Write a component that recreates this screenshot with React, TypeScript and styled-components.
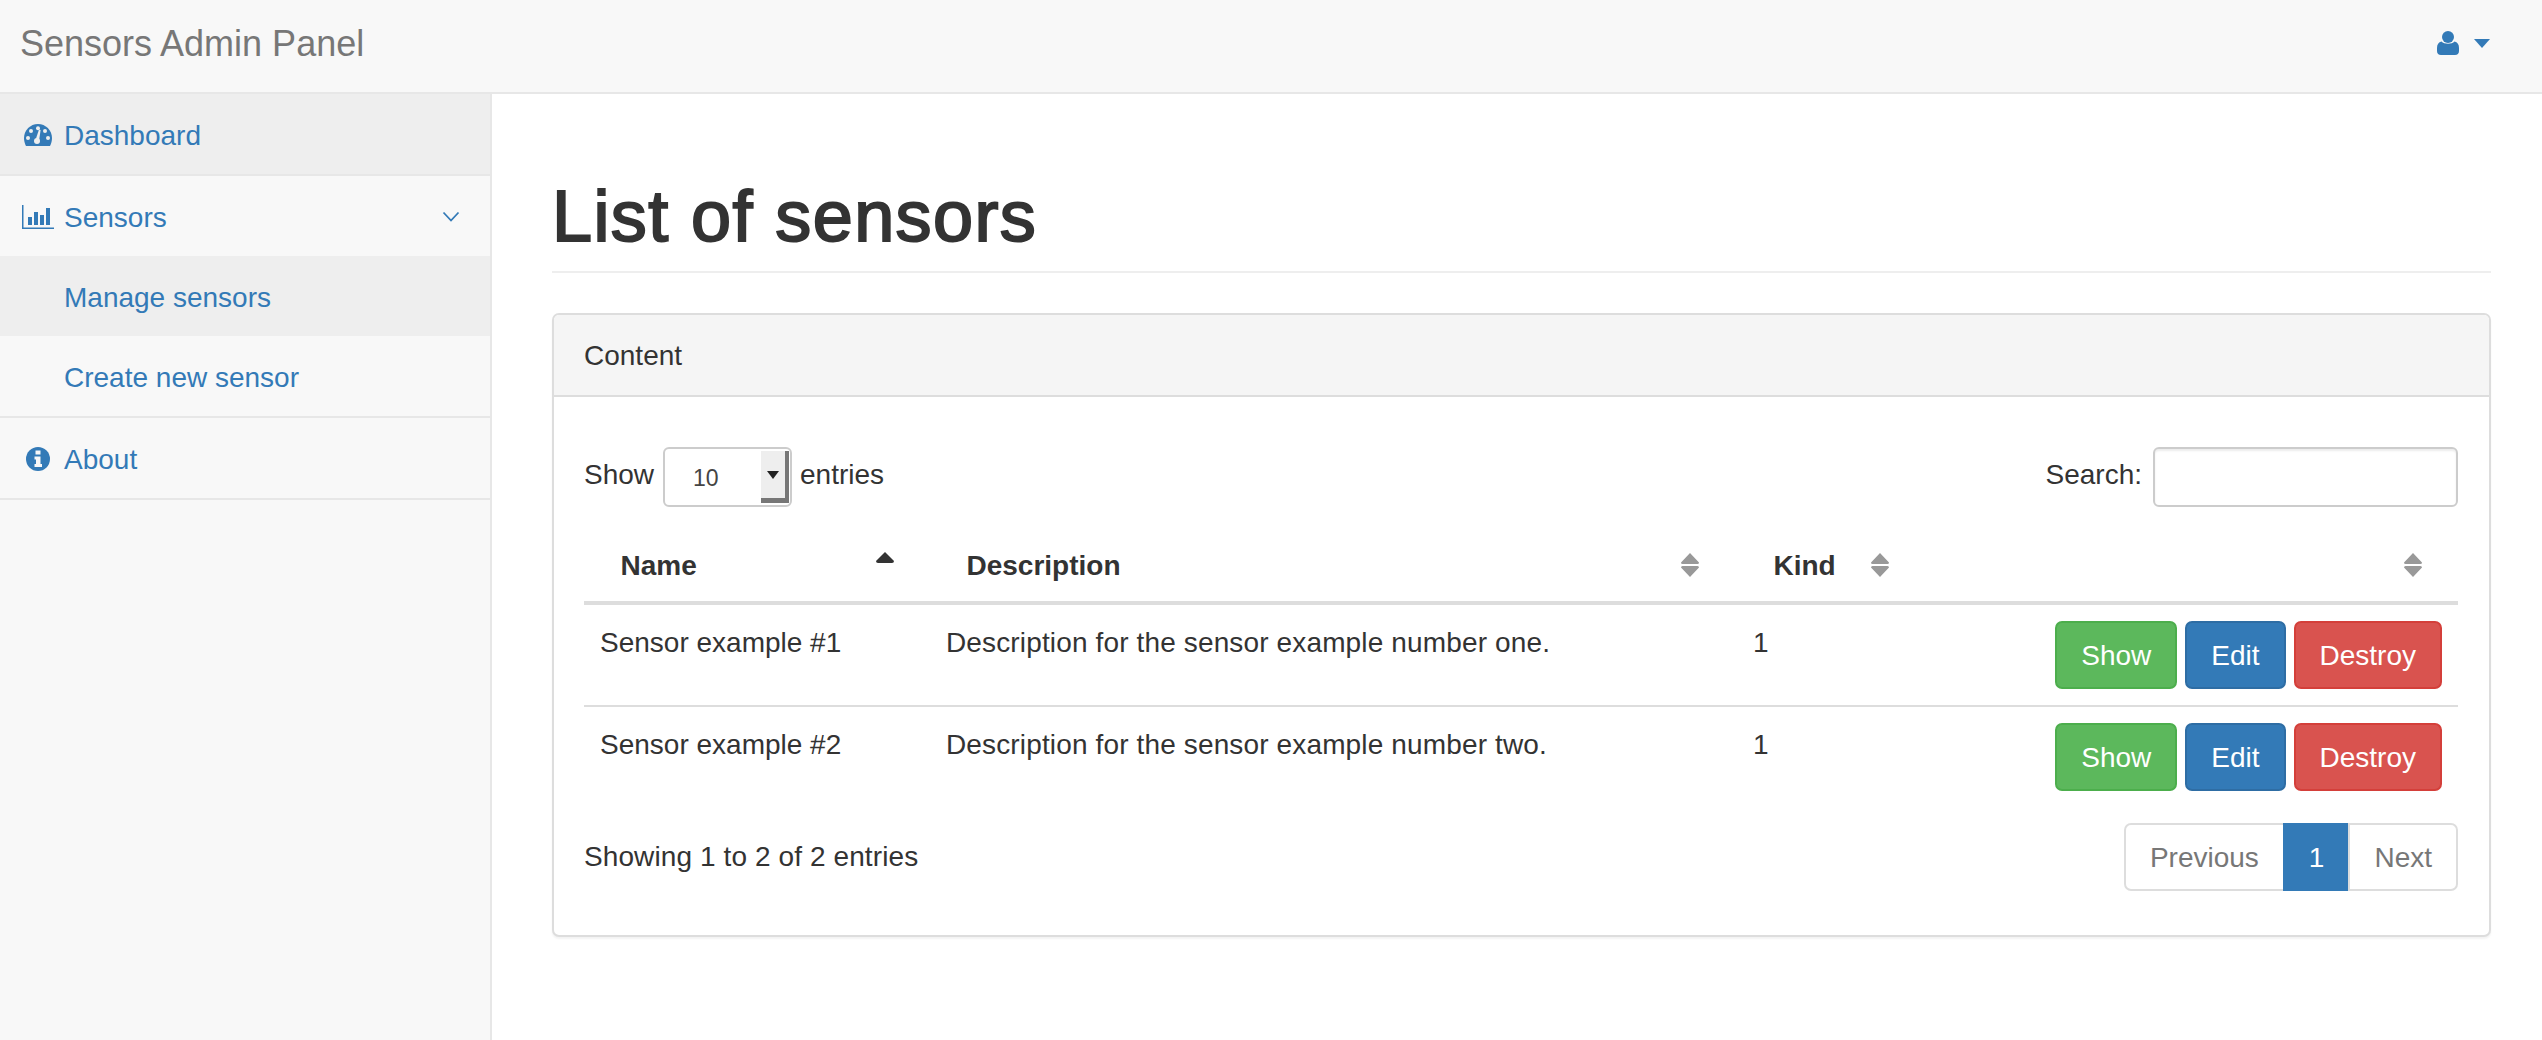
import React from "react";
import styled, { createGlobalStyle } from "styled-components";

const Global = createGlobalStyle`
  * { box-sizing: border-box; }
  html, body { margin: 0; padding: 0; height: 100%; background: #fff; }
  body { font-family: "Liberation Sans", Arial, sans-serif; font-size: 28px; line-height: 37px; color: #333; }
`;

const Page = styled.div`
  width: 2542px;
  height: 1040px;
  display: flex;
  flex-direction: column;
  overflow: hidden;
`;
const NavBar = styled.header`
  height: 94px;
  flex: none;
  background: #f8f8f8;
  border-bottom: 2px solid #e7e7e7;
  display: flex;
  align-items: center;
  justify-content: space-between;
  padding: 0 52px 0 20px;
`;
const Brand = styled.a`
  font-size: 36px;
  color: #777;
  margin-top: -6px;
`;
const UserMenu = styled.div`
  display: flex;
  align-items: center;
  gap: 15px;
  color: #337ab7;
  margin-top: -6px;
`;
const Body = styled.div`
  flex: 1;
  display: flex;
  min-height: 0;
`;
const SideBar = styled.nav`
  width: 492px;
  flex: none;
  background: #f8f8f8;
  border-right: 2px solid #e7e7e7;
`;
const NavItem = styled.a<{ $active?: boolean; $sub?: boolean; $divided?: boolean }>`
  display: flex;
  align-items: center;
  height: ${(p) => (p.$divided ? 82 : 80)}px;
  padding-left: ${(p) => (p.$sub ? 64 : 22)}px;
  padding-right: 30px;
  padding-top: 2px;
  color: #337ab7;
  background: ${(p) => (p.$active ? "#eee" : "transparent")};
  border-bottom: ${(p) => (p.$divided ? "2px solid #e7e7e7" : "none")};
`;
const NavIcon = styled.span`
  width: 32px;
  height: 32px;
  margin-right: 10px;
  flex: none;
  display: flex;
  align-items: center;
  justify-content: center;
  color: #337ab7;
`;
const Chevron = styled.svg`
  margin-left: auto;
`;
const Main = styled.main`
  flex: 1;
  min-width: 0;
  padding: 0 51px 0 60px;
`;
const Title = styled.h1`
  margin: 76px 0 40px;
  padding-bottom: 9px;
  border-bottom: 2px solid #eee;
  font-size: 72px;
  font-weight: 400;
  line-height: 92px;
  letter-spacing: 1.4px;
  color: #333;
  -webkit-text-stroke: 2px #333;
`;
const Panel = styled.section`
  height: 624px;
  border: 2px solid #ddd;
  border-radius: 7px;
  background: #fff;
  box-shadow: 0 2px 2px rgba(0, 0, 0, 0.05);
`;
const PanelHeading = styled.div`
  height: 82px;
  padding: 0 30px;
  display: flex;
  align-items: center;
  background: #f5f5f5;
  border-bottom: 2px solid #ddd;
  border-radius: 5px 5px 0 0;
`;
const PanelBody = styled.div`
  padding: 50px 31px 0 30px;
`;
const Controls = styled.div`
  display: flex;
  align-items: center;
  justify-content: space-between;
  height: 60px;
`;
const Label = styled.label`
  display: flex;
  align-items: center;
  margin-top: -6px;
`;
const PageSize = styled.div`
  width: 129px;
  height: 60px;
  margin: 6px 8px 0 9px;
  border: 2px solid #ccc;
  border-radius: 6px;
  background: #fff;
  display: flex;
  font-size: 23px;
  color: #444;
  padding: 2px 1px 2px 0;
`;
const PageSizeValue = styled.span`
  flex: 1;
  padding: 9px 0 0 28px;
`;
const Spinner = styled.span`
  width: 28px;
  background: #eee;
  border-right: 4px solid #777;
  border-bottom: 5px solid #777;
  display: flex;
  align-items: center;
  justify-content: center;
  &::before {
    content: "";
    border-left: 6px solid transparent;
    border-right: 6px solid transparent;
    border-top: 8px solid #222;
  }
`;
const SearchInput = styled.input`
  width: 305px;
  height: 60px;
  margin: 6px 0 0 11px;
  border: 2px solid #ccc;
  border-radius: 6px;
  background: #fff;
  box-shadow: inset 0 2px 2px rgba(0, 0, 0, 0.075);
  outline: none;
`;
const Table = styled.table`
  width: 100%;
  margin-top: 0;
  border-collapse: collapse;
  table-layout: fixed;
`;
const Head = styled.th<{ $width?: number }>`
  position: relative;
  width: ${(p) => (p.$width ? `${p.$width}px` : "auto")};
  height: 96px;
  padding: 22px 0 0 36.5px;
  text-align: left;
  font-weight: 700;
  border-bottom: 4px solid #ddd;
  color: #333;
`;
const SortIcon = styled.svg<{ $right: number; $top: number }>`
  position: absolute;
  right: ${(p) => p.$right}px;
  top: ${(p) => p.$top}px;
`;
const Cell = styled.td<{ $actions?: boolean; $wide?: boolean }>`
  padding: ${(p) => (p.$actions ? "16px 16px 16px 0" : "19px 16px 0")};
  vertical-align: top;
  text-align: ${(p) => (p.$actions ? "right" : "left")};
  letter-spacing: ${(p) => (p.$wide ? "0.14px" : "0")};
`;
const Row = styled.tr`
  & + & { border-top: 2px solid #ddd; }
`;
const Actions = styled.div`
  display: flex;
  justify-content: flex-end;
  gap: 8px;
`;
const Button = styled.a<{ $bg: string; $border: string }>`
  height: 68px;
  padding: 0 24px;
  display: flex;
  align-items: center;
  color: #fff;
  background: ${(p) => p.$bg};
  border: 2px solid ${(p) => p.$border};
  border-radius: 7px;
`;
const Footer = styled.div`
  display: flex;
  justify-content: space-between;
  align-items: center;
  margin-top: 16px;
`;
const Summary = styled.span`
  margin-top: -1px;
  letter-spacing: 0.1px;
`;
const Pagination = styled.div`
  display: flex;
  height: 68px;
`;
const PageLink = styled.a<{ $active?: boolean; $first?: boolean; $last?: boolean }>`
  display: flex;
  align-items: center;
  padding: 0 24px;
  margin-left: ${(p) => (p.$first ? 0 : -2)}px;
  color: ${(p) => (p.$active ? "#fff" : "#777")};
  background: ${(p) => (p.$active ? "#337ab7" : "#fff")};
  border: 2px solid ${(p) => (p.$active ? "#337ab7" : "#ddd")};
  border-radius: ${(p) => (p.$first ? "7px 0 0 7px" : p.$last ? "0 7px 7px 0" : "0")};
`;

const Sort = ({ right }: { right: number }) => (
  <SortIcon $right={right} $top={46} width="18" height="24" viewBox="0 0 18 24">
    <path d="M9 0 L18 9.500 Q18 11 16.500 11 H1.500 Q0 11 0 9.500 Z M1.500 13 H16.500 Q18 13 18 14.500 L9 24 L0 14.500 Q0 13 1.500 13 Z" fill="#999" />
  </SortIcon>
);
const SortAsc = ({ right }: { right: number }) => (
  <SortIcon $right={right} $top={45} width="18" height="11" viewBox="0 0 18 11">
    <path d="M9 0 L18 9 Q18 11 16 11 H2 Q0 11 0 9 Z" fill="#333" />
  </SortIcon>
);

const GaugeIcon = () => (
  <svg width="28" height="22" viewBox="0 0 28 22">
    <path fill="currentColor" d="M14 0 C6.300 0 0 6.300 0 14 C0 16.800 0.800 19.600 2 22 H26 C27.200 19.600 28 16.800 28 14 C28 6.300 21.700 0 14 0 Z" />
    <g fill="#eee">
      <circle cx="14" cy="4.300" r="2" />
      <circle cx="7" cy="7" r="2" />
      <circle cx="21" cy="7" r="2" />
      <circle cx="4" cy="14" r="2" />
      <circle cx="24" cy="14" r="2" />
      <circle cx="13" cy="17" r="3" />
      <path d="M11.500 16 L15 5.500 L16.600 6 L15 17 Z" />
    </g>
  </svg>
);
const ChartIcon = () => (
  <svg width="32" height="24" viewBox="0 0 32 24">
    <path fill="currentColor" d="M0 0 H1.500 V22.500 H32 V24 H0 Z M6 12 H10 V20 H6 Z M12 7 H16 V20 H12 Z M18 10 H22 V20 H18 Z M24 3 H28 V20 H24 Z" />
  </svg>
);
const InfoIcon = () => (
  <svg width="24" height="24" viewBox="0 0 24 24">
    <circle cx="12" cy="12" r="12" fill="currentColor" />
    <path fill="#f8f8f8" d="M9.500 3.500 H14.500 V7.500 H9.500 Z M8.500 9.500 H14.500 V17 H16 V20 H8.500 V17 H10 V12.500 H8.500 Z" />
  </svg>
);
const UserIcon = () => (
  <svg width="22" height="24" viewBox="0 0 22 24">
    <circle cx="11" cy="6" r="6" fill="currentColor" />
    <path fill="currentColor" d="M4.500 10.500 C7 13.500 15 13.500 17.500 10.500 C20.500 11 22 13.500 22 17 V20 C22 22.500 20.500 24 18 24 H4 C1.500 24 0 22.500 0 20 V17 C0 13.500 1.500 11 4.500 10.500 Z" />
  </svg>
);
const Caret = styled.span`
  border-left: 8px solid transparent;
  border-right: 8px solid transparent;
  border-top: 9px solid #337ab7;
`;

const rows = [
  ["Sensor example #1", "Description for the sensor example number one."],
  ["Sensor example #2", "Description for the sensor example number two."],
];

export default function App() {
  return (
    <Page>
      <Global />
      <NavBar>
        <Brand>Sensors Admin Panel</Brand>
        <UserMenu>
          <UserIcon />
          <Caret />
        </UserMenu>
      </NavBar>
      <Body>
        <SideBar>
          <NavItem $active $divided>
            <NavIcon><GaugeIcon /></NavIcon>
            Dashboard
          </NavItem>
          <NavItem>
            <NavIcon><ChartIcon /></NavIcon>
            Sensors
            <Chevron width="18" height="12" viewBox="0 0 18 12">
              <path d="M1.500 1.500 L9 9.500 L16.500 1.500" fill="none" stroke="currentColor" strokeWidth="1.800" />
            </Chevron>
          </NavItem>
          <NavItem $sub $active>Manage sensors</NavItem>
          <NavItem $sub $divided>Create new sensor</NavItem>
          <NavItem $divided>
            <NavIcon><InfoIcon /></NavIcon>
            About
          </NavItem>
        </SideBar>
        <Main>
          <Title>List of sensors</Title>
          <Panel>
            <PanelHeading>Content</PanelHeading>
            <PanelBody>
              <Controls>
                <Label>
                  Show
                  <PageSize>
                    <PageSizeValue>10</PageSizeValue>
                    <Spinner />
                  </PageSize>
                  entries
                </Label>
                <Label>
                  Search:
                  <SearchInput />
                </Label>
              </Controls>
              <Table>
                <thead>
                  <tr>
                    <Head $width={346}>Name<SortAsc right={36} /></Head>
                    <Head $width={807}>Description<Sort right={38} /></Head>
                    <Head $width={170}>Kind<Sort right={18} /></Head>
                    <Head><Sort right={36} /></Head>
                  </tr>
                </thead>
                <tbody>
                  {rows.map(([name, description]) => (
                    <Row key={name}>
                      <Cell>{name}</Cell>
                      <Cell $wide>{description}</Cell>
                      <Cell>1</Cell>
                      <Cell $actions>
                        <Actions>
                          <Button $bg="#5cb85c" $border="#4cae4c">Show</Button>
                          <Button $bg="#337ab7" $border="#2e6da4">Edit</Button>
                          <Button $bg="#d9534f" $border="#d43f3a">Destroy</Button>
                        </Actions>
                      </Cell>
                    </Row>
                  ))}
                </tbody>
              </Table>
              <Footer>
                <Summary>Showing 1 to 2 of 2 entries</Summary>
                <Pagination>
                  <PageLink $first>Previous</PageLink>
                  <PageLink $active>1</PageLink>
                  <PageLink $last>Next</PageLink>
                </Pagination>
              </Footer>
            </PanelBody>
          </Panel>
        </Main>
      </Body>
    </Page>
  );
}
